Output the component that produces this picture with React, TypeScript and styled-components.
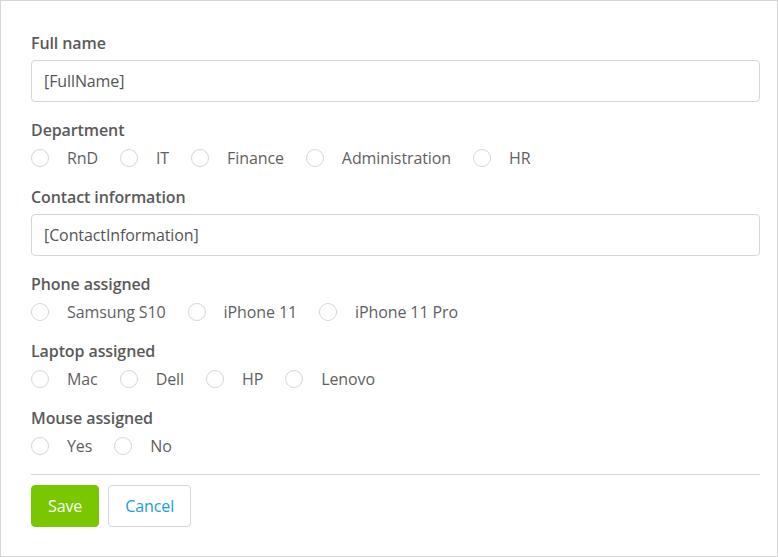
import React, { useState } from "react";
import styled, { createGlobalStyle } from "styled-components";

const GlobalStyle = createGlobalStyle`
  html, body {
    margin: 0;
    padding: 0;
    background: #fff;
  }
  * {
    box-sizing: border-box;
  }
`;

const Frame = styled.div`
  width: 778px;
  height: 557px;
  border: 1px solid #d6d6d6;
  padding: 31px 17px 0 30px;
  font-family: "Open Sans", "Liberation Sans", sans-serif;
  font-size: 16px;
  letter-spacing: -0.1px;
  color: #555;
`;

const FormGroup = styled.div`
  margin-bottom: 17px;
`;

const Label = styled.div`
  font-weight: 600;
  line-height: 22px;
  color: #5a5a5a;
  margin-bottom: 6px;
`;

const TextInput = styled.input`
  display: block;
  width: 100%;
  height: 42px;
  padding: 0 12px;
  border: 1px solid #d6d6d6;
  border-radius: 4px;
  font-family: inherit;
  font-size: 16px;
  letter-spacing: -0.1px;
  color: #555;
  outline: none;
`;

const RadioRow = styled.div`
  display: flex;
  align-items: center;
  height: 23px;
  margin-top: -1px;
  gap: 22px;
`;

const RadioOption = styled.label`
  display: flex;
  align-items: center;
  gap: 18px;
  cursor: pointer;
  color: #5f5f5f;
  line-height: 22px;
`;

const Circle = styled.span<{ $checked: boolean }>`
  width: 18px;
  height: 18px;
  border-radius: 50%;
  border: 1px solid #d6d6d6;
  background: #fff;
  display: inline-flex;
  align-items: center;
  justify-content: center;
  &::after {
    content: "";
    width: 8px;
    height: 8px;
    border-radius: 50%;
    background: ${(p) => (p.$checked ? "#1a9be0" : "transparent")};
  }
`;

const Divider = styled.hr`
  border: none;
  border-top: 1px solid #d6d6d6;
  margin: 0 0 10px 0;
`;

const Actions = styled.div`
  display: flex;
  gap: 9px;
`;

const Button = styled.button<{ $primary?: boolean }>`
  height: 42px;
  padding: 0 16px;
  border-radius: 4px;
  font-family: inherit;
  font-size: 16px;
  letter-spacing: -0.1px;
  cursor: pointer;
  border: 1px solid ${(p) => (p.$primary ? "#78c700" : "#d6d6d6")};
  background: ${(p) => (p.$primary ? "#78c700" : "#fff")};
  color: ${(p) => (p.$primary ? "#fff" : "#1a9be0")};
`;

type RadioGroupProps = {
  options: string[];
  name: string;
};

const RadioGroup = ({ options, name }: RadioGroupProps) => {
  const [value, setValue] = useState<string | null>(null);
  return (
    <RadioRow>
      {options.map((o) => (
        <RadioOption key={o} onClick={() => setValue(o)} data-name={name}>
          <Circle $checked={value === o} />
          {o}
        </RadioOption>
      ))}
    </RadioRow>
  );
};

export default function App() {
  const [fullName, setFullName] = useState("[FullName]");
  const [contact, setContact] = useState("[ContactInformation]");

  return (
    <>
      <GlobalStyle />
      <Frame>
        <FormGroup>
          <Label>Full name</Label>
          <TextInput value={fullName} onChange={(e) => setFullName(e.target.value)} />
        </FormGroup>
        <FormGroup>
          <Label>Department</Label>
          <RadioGroup name="department" options={["RnD", "IT", "Finance", "Administration", "HR"]} />
        </FormGroup>
        <FormGroup>
          <Label>Contact information</Label>
          <TextInput value={contact} onChange={(e) => setContact(e.target.value)} />
        </FormGroup>
        <FormGroup>
          <Label>Phone assigned</Label>
          <RadioGroup name="phone" options={["Samsung S10", "iPhone 11", "iPhone 11 Pro"]} />
        </FormGroup>
        <FormGroup>
          <Label>Laptop assigned</Label>
          <RadioGroup name="laptop" options={["Mac", "Dell", "HP", "Lenovo"]} />
        </FormGroup>
        <FormGroup>
          <Label>Mouse assigned</Label>
          <RadioGroup name="mouse" options={["Yes", "No"]} />
        </FormGroup>
        <Divider />
        <Actions>
          <Button $primary>Save</Button>
          <Button>Cancel</Button>
        </Actions>
      </Frame>
    </>
  );
}
